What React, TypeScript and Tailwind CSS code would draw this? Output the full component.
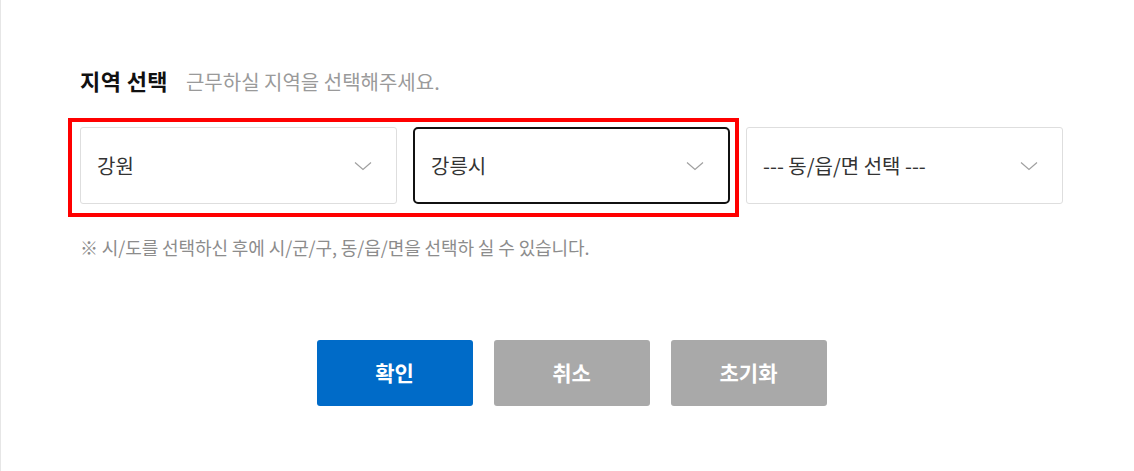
import { useState } from 'react';

const FONT = { fontFamily: '"Noto Sans CJK KR", "Noto Sans", sans-serif' };

interface SelectBoxProps {
  value: string;
  focused?: boolean;
}

const Chevron = () => (
  <svg width="18" height="10" viewBox="0 0 18 10" fill="none" className="shrink-0">
    <path d="M1 1.5 L9 8.5 L17 1.5" stroke="#a0a0a0" strokeWidth="1.2" />
  </svg>
);

const SelectBox = ({ value, focused }: SelectBoxProps) => (
  <div
    className={`w-[317px] h-[77px] flex items-center justify-between pl-[16px] pr-[24px] bg-white ${
      focused ? 'border-2 border-[#111] rounded-[5px]' : 'border border-[#dedede] rounded-[3px]'
    }`}
  >
    <span className="text-[20px] text-[#333]">{value}</span>
    <Chevron />
  </div>
);

export default function App() {
  const [sido] = useState('강원');
  const [sigungu] = useState('강릉시');

  return (
    <div className="w-[1134px] h-[471px] bg-white border-l border-[#e6e6e6] overflow-hidden" style={FONT}>
      <div className="w-[983px] ml-[79px] pt-[64px]">
        {/* title */}
        <div className="h-[32px] flex items-baseline gap-[18px]">
          <h2 className="text-[22px] font-bold text-[#111] tracking-[0.4px]">지역 선택</h2>
          <p className="text-[20px] text-[#9a9a9a]">근무하실 지역을 선택해주세요.</p>
        </div>

        {/* selects */}
        <div className="relative mt-[31px] flex gap-[16px]">
          <SelectBox value={sido} />
          <SelectBox value={sigungu} focused />
          <SelectBox value="--- 동/읍/면 선택 ---" />
          {/* highlight annotation */}
          <div className="absolute left-[-12px] top-[-9px] w-[671px] h-[99px] border-4 border-[#ff0000] pointer-events-none" />
        </div>

        <p className="mt-[31px] h-[24px] leading-[24px] text-[18px] text-[#8c8c8c] tracking-[-0.1px]">
          ※ 시/도를 선택하신 후에 시/군/구, 동/읍/면을 선택하 실 수 있습니다.
        </p>

        {/* buttons */}
        <div className="mt-[81px] flex justify-center gap-[21px]">
          <button className="w-[156px] h-[66px] rounded-[3px] bg-[#006bc8] text-white text-[21px] font-bold">확인</button>
          <button className="w-[156px] h-[66px] rounded-[3px] bg-[#a9a9a9] text-white text-[21px] font-bold">취소</button>
          <button className="w-[156px] h-[66px] rounded-[3px] bg-[#a9a9a9] text-white text-[21px] font-bold">초기화</button>
        </div>
      </div>
    </div>
  );
}
